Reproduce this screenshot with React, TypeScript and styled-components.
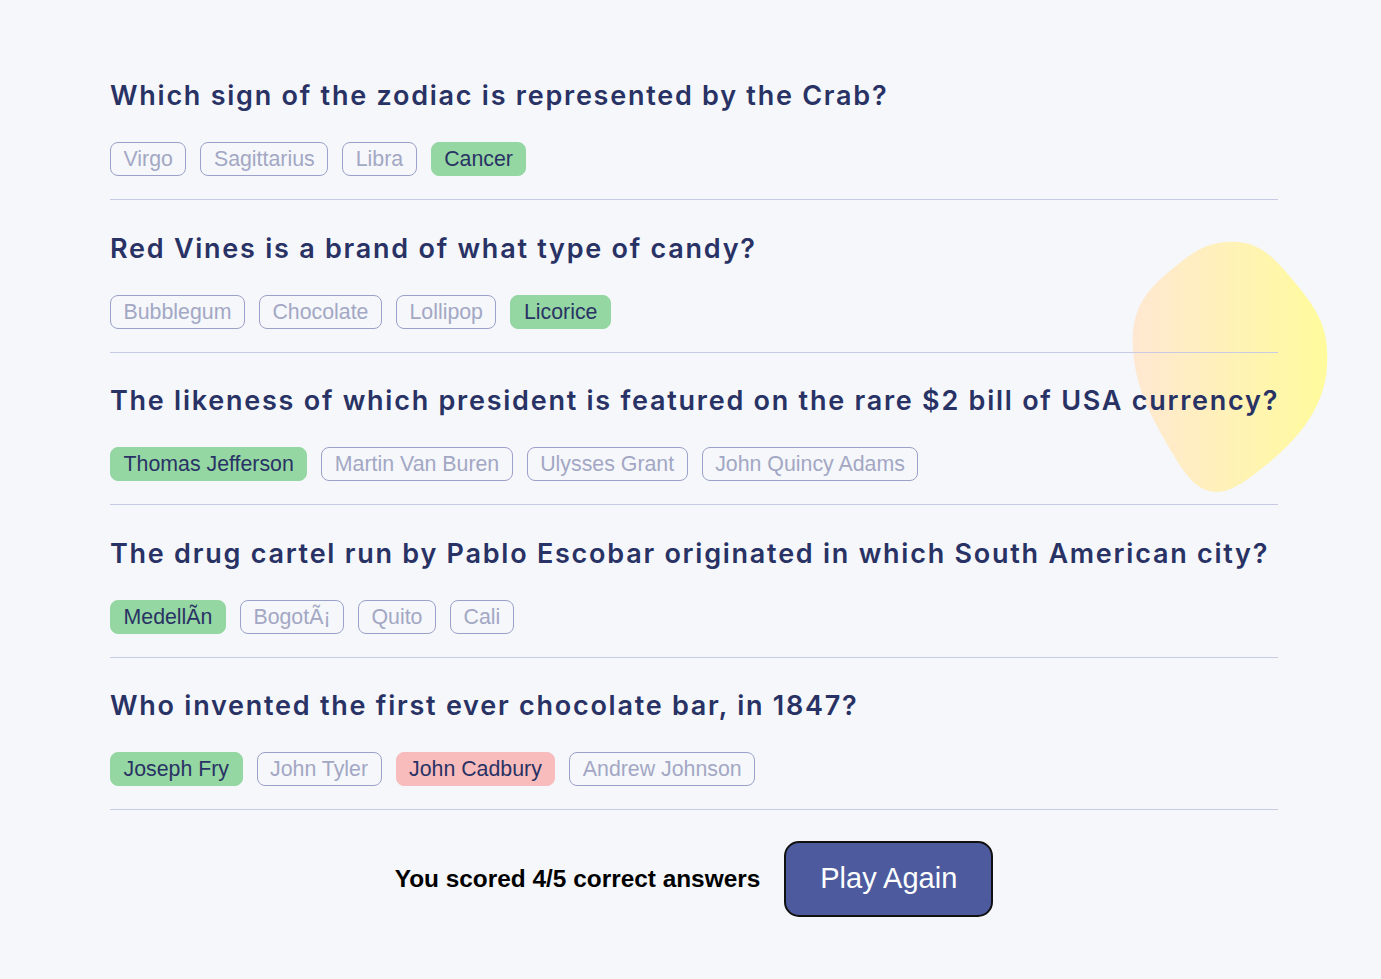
import React from "react";
import styled, { createGlobalStyle } from "styled-components";

const Global = createGlobalStyle`
  html, body { margin: 0; padding: 0; background: #f5f7fb; }
  body { font-family: "Liberation Sans", Arial, sans-serif; }
`;

const Page = styled.main`
  position: relative;
  min-height: 979px;
  overflow: hidden;
  background: #f5f7fb;
`;

const Blob = styled.svg`
  position: absolute;
  left: 1131px;
  top: 240px;
  width: 197px;
  height: 253px;
  z-index: 0;
`;

const Quiz = styled.section`
  position: relative;
  z-index: 1;
  width: 1168px;
  margin-left: 110px;
  padding-top: 78px;
`;

const Question = styled.article`
  border-bottom: 1px solid #c8cbe4;
  padding-bottom: 23px;
  margin-bottom: 30.5px;
`;

const Title = styled.h2`
  margin: 0 0 28px;
  font-family: "Inter", sans-serif;
  font-weight: 600;
  font-size: 27px;
  line-height: 36px;
  letter-spacing: 1.75px;
  color: #293264;
  white-space: nowrap;
`;

const Answers = styled.div`
  display: flex;
  gap: 14px;
`;

type Status = "idle" | "correct" | "wrong";

const Answer = styled.button<{ $status: Status }>`
  height: 34px;
  padding: 0 12.5px;
  border-radius: 8px;
  font-family: "Liberation Sans", Arial, sans-serif;
  font-size: 21.33px;
  line-height: 32px;
  cursor: pointer;
  border: 1px solid
    ${(p) => (p.$status === "idle" ? "#9ba1c9" : p.$status === "correct" ? "#94d7a2" : "#f8bcbc")};
  background: ${(p) =>
    p.$status === "correct" ? "#94d7a2" : p.$status === "wrong" ? "#f8bcbc" : "transparent"};
  color: ${(p) => (p.$status === "idle" ? "#a3a7c4" : "#293264")};
`;

const Footer = styled.div`
  display: flex;
  justify-content: center;
  align-items: center;
  gap: 24px;
  margin-top: 2px;
`;

const Score = styled.p`
  margin: 0;
  font-family: "Liberation Sans", Arial, sans-serif;
  font-weight: 700;
  font-size: 24.4px;
  color: #000;
`;

const PlayAgain = styled.button`
  width: 209px;
  height: 76px;
  border: 2px solid #111;
  border-radius: 15px;
  background: #4d5b9e;
  color: #fff;
  font-family: "Liberation Sans", Arial, sans-serif;
  font-size: 29px;
  cursor: pointer;
`;

const data: { q: string; answers: [string, Status][] }[] = [
  {
    q: "Which sign of the zodiac is represented by the Crab?",
    answers: [["Virgo", "idle"], ["Sagittarius", "idle"], ["Libra", "idle"], ["Cancer", "correct"]],
  },
  {
    q: "Red Vines is a brand of what type of candy?",
    answers: [["Bubblegum", "idle"], ["Chocolate", "idle"], ["Lollipop", "idle"], ["Licorice", "correct"]],
  },
  {
    q: "The likeness of which president is featured on the rare $2 bill of USA currency?",
    answers: [
      ["Thomas Jefferson", "correct"],
      ["Martin Van Buren", "idle"],
      ["Ulysses Grant", "idle"],
      ["John Quincy Adams", "idle"],
    ],
  },
  {
    q: "The drug cartel run by Pablo Escobar originated in which South American city?",
    answers: [["MedellÃn", "correct"], ["BogotÃ¡", "idle"], ["Quito", "idle"], ["Cali", "idle"]],
  },
  {
    q: "Who invented the first ever chocolate bar, in 1847?",
    answers: [
      ["Joseph Fry", "correct"],
      ["John Tyler", "idle"],
      ["John Cadbury", "wrong"],
      ["Andrew Johnson", "idle"],
    ],
  },
];

export default function App() {
  return (
    <Page>
      <Global />
      <Blob viewBox="0 0 197 253">
        <defs>
          <linearGradient id="blobGrad" x1="0" y1="0" x2="1" y2="0">
            <stop offset="0" stopColor="#ffe8d2" />
            <stop offset="1" stopColor="#fffb9c" />
          </linearGradient>
        </defs>
        <path
          d="M96,2 C128,0 142,16 166,45 C190,74 198,92 196,126 C194,165 170,196 140,221 C116,241 100,252 86,252 C66,252 55,236 40,211 C20,176 5,150 2,110 C-1,70 15,50 40,30 C60,13 75,3 96,2 Z"
          fill="url(#blobGrad)"
        />
      </Blob>
      <Quiz>
        {data.map((item) => (
          <Question key={item.q}>
            <Title>{item.q}</Title>
            <Answers>
              {item.answers.map(([a, s]) => (
                <Answer key={a} $status={s}>
                  {a}
                </Answer>
              ))}
            </Answers>
          </Question>
        ))}
        <Footer>
          <Score>You scored 4/5 correct answers</Score>
          <PlayAgain>Play Again</PlayAgain>
        </Footer>
      </Quiz>
    </Page>
  );
}
